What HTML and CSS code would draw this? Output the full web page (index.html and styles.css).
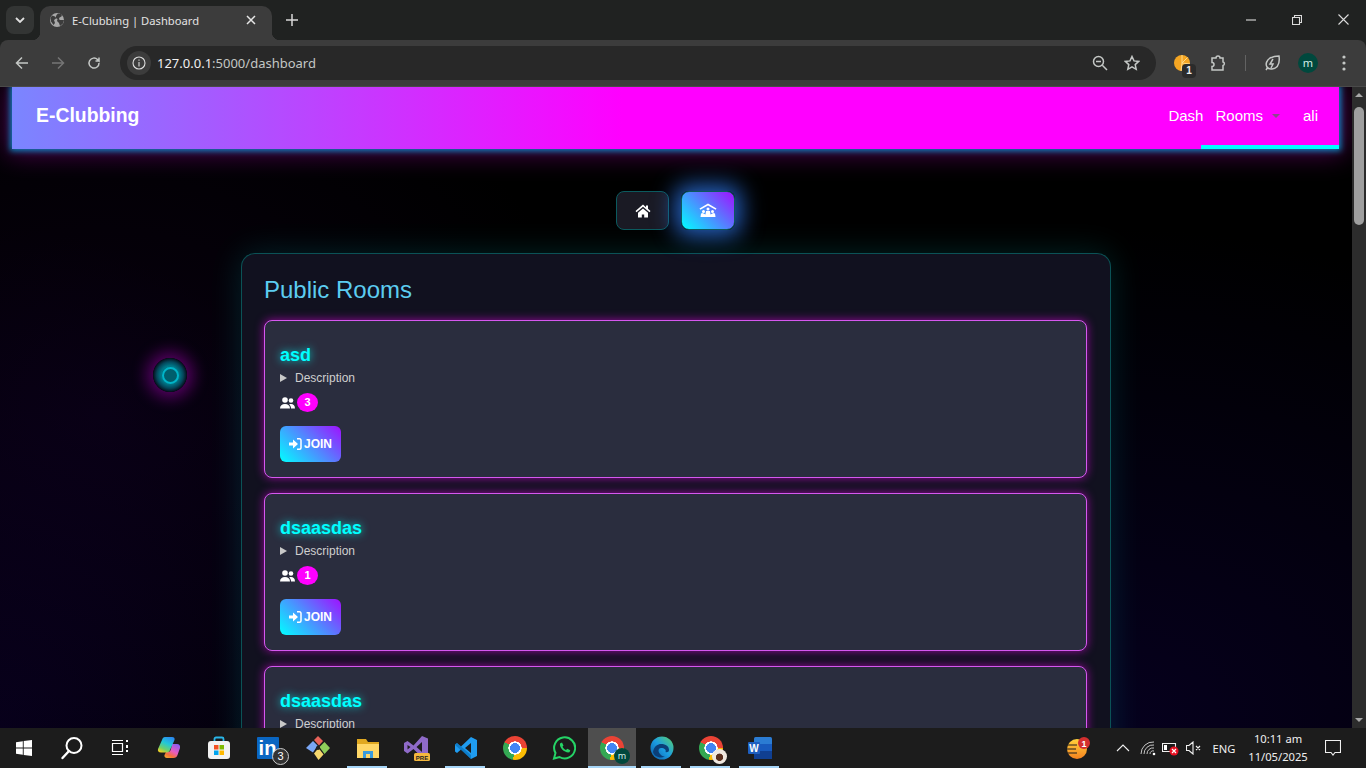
FILE: index.html
```html
<!DOCTYPE html>
<html lang="en">
<head>
<meta charset="utf-8">
<title>E-Clubbing | Dashboard</title>
<link rel="stylesheet" href="styles.css">
</head>
<body>
<header class="browser">
  <div class="tabstrip">
    <button class="tablist"><svg width="10" height="6" viewBox="0 0 10 6"><path d="M1 1l4 4 4-4" class="st-light2"/></svg></button>
    <div class="tab">
      <svg class="favicon" width="16" height="16" viewBox="0 0 16 16"><circle cx="8" cy="8" r="7" fill="#a8a8a8"/><path d="M3 3.500l3 1 1 2-2 1.500 1 3-1.500 2L2 9.500 1.500 6zM9 1.500l3 .5 1 2-3 2 .5 2h4.500l-1 3.500-3 2.500-1-3-2-2 .5-2-2-1 1-3z" fill="#3c3c3c"/></svg>
      <span class="tab-title">E-Clubbing | Dashboard</span>
      <svg class="tab-close" width="10" height="10" viewBox="0 0 10 10"><path d="M1 1l8 8M9 1l-8 8" class="st-white"/></svg>
    </div>
    <svg class="newtab" width="12" height="12" viewBox="0 0 12 12"><path d="M6 0v12M0 6h12" class="st-light"/></svg>
    <div class="win-controls">
      <span class="win-btn"><svg width="10" height="10" viewBox="0 0 10 10"><path d="M0 5h10" class="st-thin"/></svg></span>
      <span class="win-btn"><svg width="10" height="10" viewBox="0 0 10 10"><path d="M.5 2.500h7v7h-7zM2.500 2.500v-2h7v7h-2" class="st-thin"/></svg></span>
      <span class="win-btn"><svg width="11" height="11" viewBox="0 0 11 11"><path d="M.5.500l10 10M10.500.500l-10 10" class="st-thin"/></svg></span>
    </div>
  </div>
  <div class="toolbar">
    <span class="tool"><svg width="14" height="14" viewBox="0 0 14 14"><path d="M13 7H2M7 1.500L1.500 7 7 12.500" class="st-mid"/></svg></span>
    <span class="tool"><svg width="14" height="14" viewBox="0 0 14 14"><path d="M1 7h11M7 1.500L12.500 7 7 12.500" class="st-dim"/></svg></span>
    <span class="tool"><svg width="14" height="14" viewBox="0 0 14 14"><path d="M12 7a5 5 0 1 1-1.500-3.500L12 5V1.500M12 5H8.500" class="st-mid"/></svg></span>
    <div class="omnibox">
      <span class="info"><svg width="14" height="14" viewBox="0 0 14 14"><circle cx="7" cy="7" r="6" class="st-thin"/><path d="M7 6v4.500M7 3.500v1.300" class="st-thin"/></svg></span>
      <span class="url"><span class="url-host">127.0.0.1</span>:5000/dashboard</span>
      <span class="omni-icon"><svg width="16" height="16" viewBox="0 0 16 16"><circle cx="6.500" cy="6.500" r="5" class="st-mid"/><path d="M10.300 10.300L15 15M4 6.500h5" class="st-mid"/></svg></span>
      <span class="omni-icon"><svg width="16" height="16" viewBox="0 0 16 16"><path d="M8 1.500l2 4.400 4.700.5-3.500 3.200 1 4.700L8 11.900l-4.200 2.400 1-4.700L1.300 6.400 6 5.900z" class="st-mid"/></svg></span>
    </div>
    <span class="tool tool-first"><svg width="24" height="24" viewBox="0 0 24 24"><circle cx="12" cy="12" r="8" fill="#f5a623"/><path d="M12 4v8l5.500-5.500M12 12l8 1M12 12l-1 8" stroke="#ffd98a" fill="none"/></svg><span class="ext-badge">1</span></span>
    <span class="tool"><svg width="18" height="18" viewBox="0 0 18 18"><path d="M3 4h4a2 2 0 0 1 4 0h3v4a1.800 1.800 0 0 1 0 3.500V16H3v-3.500a2 2 0 0 0 0-4z" class="st-mid"/></svg></span>
    <span class="tool-sep"></span>
    <span class="tool"><svg width="18" height="18" viewBox="0 0 18 18"><path d="M16 2c1 7-1 12-7 13-2 .3-4-.5-5-2-2-3 0-7 3-9 3-1.500 6-2 9-2zM3 16l2-3M10 5l-3 5h3l-2 4" class="st-mid"/></svg></span>
    <span class="tool"><span class="avatar">m</span></span>
    <span class="tool"><svg width="4" height="16" viewBox="0 0 4 16"><circle cx="2" cy="2" r="1.600" class="fill-mid"/><circle cx="2" cy="8" r="1.600" class="fill-mid"/><circle cx="2" cy="14" r="1.600" class="fill-mid"/></svg></span>
  </div>
</header>

<div class="viewport">
  <main class="page">
    <nav class="navbar">
      <a class="brand">E-Clubbing</a>
      <div class="nav-links">
        <a class="nav-link">Dash</a>
        <a class="nav-link nav-rooms">Rooms<span class="caret"></span></a>
        <a class="nav-link nav-user">ali</a>
      </div>
    </nav>

    <div class="switcher">
      <button class="switch-btn"><svg width="16" height="16" viewBox="0 0 16 16"><path class="fill-white" d="M8 1.500L.500 8l1 1.200L8 3.700l6.500 5.500 1-1.200-2.500-2.200V2.500h-2v1.800zM3 9.700L8 5.400l5 4.300v4.800H9.200v-3H6.800v3H3z"/></svg></button>
      <button class="switch-btn is-active"><svg width="18" height="16" viewBox="0 0 18 16"><path class="fill-white" d="M9 .5L.500 5.500l.8 1.300L9 2.400l7.700 4.400.8-1.300z"/><circle class="fill-white" cx="9" cy="6" r="1.500"/><circle class="fill-white" cx="4.500" cy="8.500" r="1.500"/><circle class="fill-white" cx="13.500" cy="8.500" r="1.500"/><path class="fill-white" d="M7 8h4l.5 3.500 2-1 .5-.5 2 .5.500 3.500H1.500L2 10.500l2-.5 .5.5 2 1z"/></svg></button>
    </div>

    <section class="rooms-panel">
      <h2 class="rooms-heading">Public Rooms</h2>
      <div class="room-list">
        <article class="room">
          <h3 class="room-name">asd</h3>
          <details class="room-desc"><summary>Description</summary></details>
          <div class="room-members">
            <svg width="15" height="12" viewBox="0 0 15 12"><circle class="fill-white" cx="5" cy="3" r="2.800"/><circle class="fill-white" cx="11" cy="3.500" r="2.300"/><path class="fill-white" d="M0 11.500C0 8.500 2 7 5 7s5 1.500 5 4.500zM11 11.500h4c0-3-1.500-4.500-4-4.500-.8 0-1.300.1-1.800.4 1.200.9 1.800 2.300 1.800 4.100z"/></svg>
            <span class="badge">3</span>
          </div>
          <button class="join-btn"><svg width="13" height="12" viewBox="0 0 13 12"><path class="fill-white" d="M0 4.500h4V1.500L9 6 4 10.500v-3H0z"/><path d="M8 .8h2.500a1.500 1.500 0 0 1 1.500 1.500v7.400a1.500 1.500 0 0 1-1.500 1.500H8" class="st-join"/></svg>JOIN</button>
        </article>
        <article class="room">
          <h3 class="room-name">dsaasdas</h3>
          <details class="room-desc"><summary>Description</summary></details>
          <div class="room-members">
            <svg width="15" height="12" viewBox="0 0 15 12"><circle class="fill-white" cx="5" cy="3" r="2.800"/><circle class="fill-white" cx="11" cy="3.500" r="2.300"/><path class="fill-white" d="M0 11.500C0 8.500 2 7 5 7s5 1.500 5 4.500zM11 11.500h4c0-3-1.500-4.500-4-4.500-.8 0-1.300.1-1.800.4 1.200.9 1.800 2.300 1.800 4.100z"/></svg>
            <span class="badge">1</span>
          </div>
          <button class="join-btn"><svg width="13" height="12" viewBox="0 0 13 12"><path class="fill-white" d="M0 4.500h4V1.500L9 6 4 10.500v-3H0z"/><path d="M8 .8h2.500a1.500 1.500 0 0 1 1.500 1.500v7.400a1.500 1.500 0 0 1-1.500 1.500H8" class="st-join"/></svg>JOIN</button>
        </article>
        <article class="room">
          <h3 class="room-name">dsaasdas</h3>
          <details class="room-desc"><summary>Description</summary></details>
        </article>
      </div>
    </section>

    <div class="orb"><span class="orb-ring"></span></div>
  </main>
  <aside class="scrollbar">
    <span class="sb-up"></span>
    <span class="sb-thumb"></span>
    <span class="sb-down"></span>
  </aside>
</div>

<footer class="taskbar">
  <span class="tb-item tb-narrow"><svg width="18" height="18" viewBox="0 0 18 18"><path fill="#fff" d="M1 3.200l6.800-1v6.300H1zM8.700 2.100L17 .9v7.600H8.700zM1 9.500h6.800v6.300l-6.800-1zM8.700 9.500H17v7.600l-8.300-1.200z"/></svg></span>
  <span class="tb-item tb-narrow"><svg width="24" height="24" viewBox="0 0 24 24"><circle cx="14" cy="9.500" r="7.500" fill="none" stroke="#fff" stroke-width="2"/><path d="M9 15l-6.500 7" stroke="#fff" stroke-width="2.400" stroke-linecap="round"/></svg></span>
  <span class="tb-item tb-narrow"><svg width="18" height="18" viewBox="0 0 18 18"><path d="M1.500 4.500h10v8h-10zM1 1.500h11M1 15.500h11" fill="none" stroke="#fff" stroke-width="1.200"/><path d="M15 1h2v2h-2zM15 6h2v3h-2zM15 11h2v2h-2z" fill="#fff"/></svg></span>
  <span class="tb-item tb-copilot"><svg width="24" height="24" viewBox="0 0 24 24"><defs><linearGradient id="cpA" x1=".7" y1="0" x2=".2" y2="1"><stop offset="0" stop-color="#2a8cf0"/><stop offset=".4" stop-color="#22c8d8"/><stop offset=".75" stop-color="#6fd06a"/><stop offset="1" stop-color="#f5d020"/></linearGradient><linearGradient id="cpB" x1=".8" y1="0" x2=".2" y2="1"><stop offset="0" stop-color="#8a5cf0"/><stop offset=".5" stop-color="#e85cc0"/><stop offset=".8" stop-color="#f5703a"/><stop offset="1" stop-color="#f0a030"/></linearGradient></defs><path fill="url(#cpB)" d="M15 8h5c2.200 0 3.500 1.500 3 4l-2.500 7c-.5 2-2 3-4 3H10c-2 0-3-1.500-2.500-3l1.500-3h2c1.500 0 2.500-1 3-3z"/><path fill="url(#cpA)" d="M8 1h7c2 0 3 1 2.500 3L13 14c-.5 1.500-1.500 2.500-3 2.500H4C1.500 16.500.5 15 1 13L5 4c.5-2 1.500-3 3-3z"/></svg></span>
  <span class="tb-item"><svg width="24" height="24" viewBox="0 0 24 24"><path d="M7.500 6V3a1.500 1.500 0 0 1 1.500-1.500h6A1.500 1.500 0 0 1 16.500 3v3" fill="none" stroke="#29b6e8" stroke-width="1.800"/><rect x="1" y="5" width="22" height="18" rx="3" fill="#f2f2f2"/><rect x="7" y="9" width="4.500" height="4.500" fill="#f25022"/><rect x="12.500" y="9" width="4.500" height="4.500" fill="#7fba00"/><rect x="7" y="14.500" width="4.500" height="4.500" fill="#00a4ef"/><rect x="12.500" y="14.500" width="4.500" height="4.500" fill="#ffb900"/></svg></span>
  <span class="tb-item tb-linkedin"><span class="li-logo">in</span><span class="li-count">3</span></span>
  <span class="tb-item tb-wide"><svg width="26" height="26" viewBox="0 0 26 26"><path fill="#7aa7f5" d="M1 13l7-7 4.500 4.500L8 17.500z"/><path fill="#e8635a" d="M9 5l4-4 5 5-4 4.500z"/><path fill="#8fcf5a" d="M14.500 12l5-5L25 13l-5.500 6z"/><path fill="#f5d76e" d="M9 18.500l4.500-5.500 5 6.500-5 5.500z"/><circle cx="13" cy="13" r="2" fill="#222"/></svg></span>
  <span class="tb-item tb-open"><svg width="24" height="22" viewBox="0 0 24 22"><path fill="#e0a820" d="M1 2h9l2 3h11v15H1z"/><path fill="#ffd767" d="M1 7h22v14H1z"/><path fill="#3a9bdc" d="M7 21v-7h10v7h-3v-4h-4v4z"/></svg></span>
  <span class="tb-item"><svg width="26" height="26" viewBox="0 0 26 26"><path fill="#8f6ac8" d="M0 8l3.500-2 6 4.500L18 1l6 2.500V20l-6 2.500-8.500-8.500-6 4.500L0 16zM3.500 10v4.500L6.500 12zM12.500 12l5.500 5V7z"/><rect x="10" y="18" width="16" height="8" rx="1.500" fill="#f5b83d"/><text x="18" y="24.500" class="pre-text">PRE</text></svg></span>
  <span class="tb-item tb-open"><svg width="24" height="24" viewBox="0 0 24 24"><path fill="#1f9cf0" d="M17 1l6 3v16l-6 3-10-9.500L3 17l-2-1.500v-7L3 7l4 3.500zM17 7l-6 5 6 5z"/><path fill="#0065a9" d="M1 8.500L3 7l14 12v4L1 9z" opacity=".55"/></svg></span>
  <span class="tb-item"><span class="chrome"></span></span>
  <span class="tb-item"><svg width="24" height="24" viewBox="0 0 24 24"><path d="M2 22.500l1.500-5.500a10.500 10.500 0 1 1 4 4z" fill="none" stroke="#25d366" stroke-width="2"/><path d="M8 7.500l2-1 1.500 3-1 1.300c.8 1.500 2 2.600 3.500 3.300l1.300-1.300 3 1.500-.8 2c-4.500 1-10.500-4.500-9.500-8.800z" fill="#25d366"/></svg></span>
  <span class="tb-item tb-active"><span class="chrome"></span><span class="profile-chip">m</span></span>
  <span class="tb-item tb-open"><svg width="24" height="24" viewBox="0 0 24 24"><defs><linearGradient id="edgeA" x1="0" y1="1" x2="1" y2="0"><stop offset="0" stop-color="#0c59a4"/><stop offset=".5" stop-color="#1b9de2"/><stop offset="1" stop-color="#5ad36a"/></linearGradient></defs><circle cx="12" cy="12" r="11.500" fill="url(#edgeA)"/><path fill="#0b3f78" d="M3 16c1-6 5-8 8-8 5 0 8 2.500 8 6 0 2-2 2.500-3.500 2 1-2-1-4-4.500-4-3 0-3.500 4 0 7 1 1 3 1.500 4 1.500-5 2.500-11 0-12-4.500z"/></svg></span>
  <span class="tb-item tb-open"><span class="chrome"></span><span class="profile-photo"></span></span>
  <span class="tb-item tb-open"><svg width="26" height="24" viewBox="0 0 26 24"><rect x="7" y="1" width="18" height="22" rx="1.500" fill="#2b7cd3"/><rect x="7" y="8" width="18" height="7" fill="#185abd"/><rect x="7" y="15" width="18" height="8" fill="#103f91"/><rect x="1" y="6" width="12" height="12" rx="1" fill="#1e5fc0"/><text x="7" y="15.500" class="word-text">W</text></svg></span>

  <div class="tray">
    <span class="tray-weather"><svg width="28" height="24" viewBox="0 0 28 24"><defs><linearGradient id="sunA" x1="0" y1="0" x2="0" y2="1"><stop offset="0" stop-color="#ffd23c"/><stop offset="1" stop-color="#f5821f"/></linearGradient></defs><circle cx="13" cy="13" r="10" fill="url(#sunA)"/><path d="M1 9h12M0 13h12M3 17h10" stroke="#1c1c1c" stroke-width="1.200"/><circle cx="20" cy="7" r="6" fill="#d32f2f"/><text x="20" y="10.500" class="weather-text">1</text></svg></span>
    <span class="tray-icon tray-chevron"><svg width="14" height="8" viewBox="0 0 14 8"><path d="M1 7l6-6 6 6" class="st-tray"/></svg></span>
    <span class="tray-icon"><svg width="16" height="16" viewBox="0 0 16 16"><path d="M1 14a12 12 0 0 1 13-12M4 14a9 9 0 0 1 10-9M7 14a6 6 0 0 1 7-6M10 14a3 3 0 0 1 4-3" class="st-wifi"/><circle cx="14" cy="14" r="1.300" fill="#fff"/></svg></span>
    <span class="tray-icon"><svg width="18" height="16" viewBox="0 0 18 16"><path d="M.5 3.500h13v8H.5z" class="st-tray"/><rect x="2" y="5" width="3" height="5" fill="#fff"/><circle cx="12" cy="11" r="4.500" fill="#e81123"/><path d="M10 9l4 4M14 9l-4 4" stroke="#fff" stroke-width="1.200"/></svg></span>
    <span class="tray-icon"><svg width="16" height="14" viewBox="0 0 16 14"><path d="M.5 4.500h2.500L7 1v12L3 9.500H.5zM10 5l4 4M14 5l-4 4" class="st-tray"/></svg></span>
    <span class="tray-lang">ENG</span>
    <span class="tray-clock"><span>10:11 am</span><span>11/05/2025</span></span>
    <span class="tray-notify"><svg width="16" height="16" viewBox="0 0 16 16"><path d="M.5.500h15v12H10L8 15l-2-2.500H.5z" class="st-tray"/></svg></span>
  </div>
</footer>
</body>
</html>
```
FILE: styles.css
```css
* { box-sizing: border-box; }
html, body { margin: 0; height: 768px; overflow: hidden; }
body { display: flex; flex-direction: column; width: 1366px; background: #000; font-family: "Liberation Sans", Arial, sans-serif; color: #fff; }
button { font: inherit; border: 0; padding: 0; color: inherit; }
a { color: inherit; }
svg { display: block; flex: none; }

.st-white { fill: none; stroke: #e6e6e6; stroke-width: 1.500; }
.st-light { fill: none; stroke: #d8d8d8; stroke-width: 1.500; }
.st-light2 { fill: none; stroke: #e0e0e0; stroke-width: 1.800; }
.st-thin { fill: none; stroke: #dcdcdc; stroke-width: 1.100; }
.st-mid { fill: none; stroke: #c4c7c5; stroke-width: 1.500; }
.st-dim { fill: none; stroke: #757575; stroke-width: 1.500; }
.st-join { fill: none; stroke: #fff; stroke-width: 1.500; }
.st-tray { fill: none; stroke: #f0f0f0; stroke-width: 1.100; }
.st-wifi { fill: none; stroke: #d8d8d8; stroke-width: .9; }
.fill-white { fill: #fff; }
.fill-mid { fill: #c4c7c5; }

/* browser chrome */
.browser { flex: none; height: 87px; background: #202221; }
.tabstrip { height: 40px; display: flex; align-items: flex-end; padding-left: 6px; position: relative; }
.tablist { width: 28px; height: 28px; margin-bottom: 6px; border-radius: 8px; background: #333534; display: flex; align-items: center; justify-content: center; }
.tab { width: 232px; height: 34px; margin-left: 6px; padding: 0 16px 6px 9px; background: #3c3c3c; border-radius: 10px 10px 0 0; display: flex; align-items: center; font-family: "Noto Sans", sans-serif; font-size: 11.200px; color: #e3e3e3; position: relative; }
.tab::before, .tab::after { content: ""; position: absolute; bottom: 0; width: 8px; height: 8px; }
.tab::before { left: -8px; background: radial-gradient(circle at 0 0, transparent 8px, #3c3c3c 8.500px); }
.tab::after { right: -8px; background: radial-gradient(circle at 100% 0, transparent 8px, #3c3c3c 8.500px); }
.tab-title { margin-left: 7px; flex: 1; white-space: nowrap; }
.newtab { margin: 0 0 14px 14px; }
.win-controls { margin-left: auto; align-self: stretch; display: flex; }
.win-btn { width: 46px; display: flex; align-items: center; justify-content: center; padding-bottom: 1px; }
.toolbar { height: 47px; background: #3c3c3c; border-radius: 8px 8px 0 0; padding: 0 4px 1px; display: flex; align-items: center; border-bottom: 1px solid #4a4a4a; }
.tool { width: 36px; height: 36px; display: flex; align-items: center; justify-content: center; position: relative; flex: none; }
.tool-first { margin-left: 8px; }
.tool-sep { width: 18px; height: 16px; flex: none; background: linear-gradient(#636363, #636363) center / 1px 16px no-repeat; }
.ext-badge { position: absolute; left: 18px; top: 19px; width: 14px; height: 14px; border-radius: 4px; background: #2b2b2b; font: bold 10px "Liberation Sans", sans-serif; text-align: center; line-height: 14px; color: #eee; }
.avatar { width: 20px; height: 20px; border-radius: 50%; background: #00483d; color: #d4efe9; font: 11px/20px "Noto Sans", sans-serif; text-align: center; }
.omnibox { flex: 1; height: 34px; margin-left: 8px; background: #282828; border-radius: 17px; display: flex; align-items: center; padding: 0 8px 0 7px; }
.info { width: 24px; height: 24px; border-radius: 50%; background: #3c3c3c; display: flex; align-items: center; justify-content: center; }
.url { margin-left: 6px; flex: 1; font-family: "Noto Sans", sans-serif; font-size: 13px; color: #c4c7c5; }
.url-host { color: #f0f0f0; }
.omni-icon { width: 32px; height: 32px; display: flex; align-items: center; justify-content: center; }

/* viewport */
.viewport { flex: none; height: 641px; display: flex; overflow: hidden; }
.page { flex: 1; position: relative; overflow: hidden; background:
  radial-gradient(ellipse 500px 400px at 100px 330px, rgba(30, 0, 60, .25), transparent),
  radial-gradient(ellipse 700px 500px at 1100px 640px, rgba(10, 0, 50, .6), transparent),
  radial-gradient(ellipse 400px 500px at 0 640px, rgba(12, 0, 50, .5), transparent),
  #000; }
.navbar { height: 62px; margin: 0 13px 0 12px; padding: 0 21px 6px 24px; display: flex; align-items: center; justify-content: space-between; background: linear-gradient(90deg, #7a86ff 0, #ff00ff 46%); box-shadow: 0 0 6px 2px rgba(0, 190, 255, .7), 0 0 26px 5px rgba(255, 0, 255, .3); }
.brand { font-size: 19.400px; font-weight: bold; }
.nav-links { display: flex; align-items: center; font-size: 15px; position: relative; align-self: stretch; }
.nav-links::after { content: ""; position: absolute; right: -21px; bottom: -6px; width: 138px; height: 4px; background: #00ffff; }
.nav-rooms { margin-left: 12px; display: flex; align-items: center; }
.caret { width: 0; height: 0; margin-left: 9px; margin-top: 2px; border: 4px solid transparent; border-top-color: #8a4a8a; border-bottom: 0; }
.nav-user { margin-left: 23px; }

.switcher { display: flex; justify-content: center; gap: 12px; margin-top: 42px; padding-right: 1px; }
.switch-btn { width: 53px; height: 39px; border: 1px solid #0b5a5e; border-radius: 8px; background: #1a1a24; display: flex; align-items: center; justify-content: center; }
.switch-btn.is-active { width: 54px; background: linear-gradient(45deg, #00ffff 0, #a010ff 100%); box-shadow: 0 0 22px 6px rgba(50, 130, 255, .75); }

.rooms-panel { width: 870px; height: 520px; margin: 23px auto 0; padding: 22px 23px 22px 22px; border: 1px solid #0b5256; border-bottom: 0; border-radius: 14px 14px 0 0; background: #11111f; box-shadow: 0 0 32px rgba(0, 255, 255, .14); }
.rooms-heading { margin: 0 0 16px; font-size: 24px; font-weight: normal; line-height: 28px; color: #5cccf0; }
.room-list { display: flex; flex-direction: column; gap: 15px; }
.room { height: 158px; flex: none; padding: 23px 15px 15px; border: 1px solid #d558ef; border-radius: 8px; background: #2a2d3e; box-shadow: 0 0 10px rgba(255, 0, 255, .55); }
.room-name { margin: 0; font-size: 18px; line-height: 22px; font-weight: bold; color: #00ffff; text-shadow: 0 0 8px rgba(0, 255, 255, .8); }
.room-desc { margin-top: 4px; font-size: 12px; line-height: 16px; color: #cfcfcf; }
.room-desc summary { cursor: pointer; list-style: none; display: flex; align-items: center; gap: 8px; }
.room-desc summary::before { content: ""; width: 0; height: 0; border-left: 7px solid #c8c8c8; border-top: 4px solid transparent; border-bottom: 4px solid transparent; }
.room-members { display: flex; align-items: center; gap: 2px; margin-top: 7px; height: 19px; }
.badge { width: 21px; height: 19px; border-radius: 50%; background: #ff00ff; font-size: 11px; font-weight: bold; line-height: 19px; text-align: center; }
.join-btn { margin-top: 14px; width: 61px; height: 36px; border-radius: 6px; background: linear-gradient(45deg, #00ffff 0, #4f8bff 50%, #a010ff 100%); display: flex; align-items: center; justify-content: center; gap: 2px; font-size: 12px; font-weight: bold; }

.orb { position: absolute; left: 153px; top: 271px; width: 34px; height: 34px; border-radius: 50%; background: radial-gradient(circle closest-side, #005e6c 0 36%, #007a8a 52%, #04465a 78%, #050c18 100%); box-shadow: 0 0 16px 6px rgba(200, 0, 220, .42); display: flex; align-items: center; justify-content: center; }
.orb-ring { width: 17px; height: 17px; border-radius: 50%; border: 2.500px solid #00b4c8; background: #005e6c; }

.scrollbar { flex: none; width: 14px; background: #2c2c2c; display: flex; flex-direction: column; align-items: center; position: relative; }
.sb-up { margin-top: 6px; width: 0; height: 0; flex: none; border: 4.500px solid transparent; border-top: 0; border-bottom-color: #a8a8a8; }
.sb-thumb { margin-top: 10px; width: 10px; height: 118px; flex: none; border-radius: 5px; background: #9f9f9f; }
.sb-down { margin-top: auto; margin-bottom: 6px; width: 0; height: 0; border: 4.500px solid transparent; border-bottom: 0; border-top-color: #a8a8a8; }

/* taskbar */
.taskbar { flex: none; height: 40px; background: #1c1c1c; display: flex; position: relative; }
.tb-item { width: 49px; height: 40px; flex: none; display: flex; align-items: center; justify-content: center; position: relative; }
.tb-narrow { width: 48px; }
.tb-copilot { width: 50px; }
.tb-wide { width: 51px; }
.tb-open::after, .tb-active::after { content: ""; position: absolute; bottom: 0; left: 4px; right: 5px; height: 2px; background: #a6d5f7; }
.tb-active { background: #4e4e4e content-box; padding-right: 1px; }
.tb-active::after { left: 0; right: 1px; }
.tb-linkedin { font-family: "Liberation Sans", sans-serif; }
.li-logo { width: 22px; height: 22px; background: #0a66c2; border-radius: 1px; font-size: 20px; font-weight: bold; line-height: 22px; text-align: center; }
.li-count { position: absolute; left: 29px; top: 20px; width: 17px; height: 17px; border-radius: 50%; background: #333; border: 1px solid #ccc; font-size: 11px; line-height: 15px; text-align: center; }
.chrome { width: 24px; height: 24px; border-radius: 50%; background:
  radial-gradient(circle closest-side, #4285f4 0 40%, #fff 42% 54%, transparent 56%),
  conic-gradient(from -60deg, #ea4335 0 150deg, #fbbc04 150deg 250deg, #34a853 250deg 360deg); }
.profile-chip { position: absolute; left: 26px; top: 20px; width: 16px; height: 16px; border-radius: 50%; background: #00483d; font: 9px/16px "Noto Sans", sans-serif; text-align: center; color: #d4efe9; }
.profile-photo { position: absolute; left: 26px; top: 21px; width: 15px; height: 15px; border-radius: 50%; background: radial-gradient(circle at 50% 55%, #5a2f1f 0 30%, #efe8e0 36%); }
.pre-text { font: bold 6px "Liberation Sans", sans-serif; fill: #222; text-anchor: middle; }
.word-text { font: bold 10px "Liberation Sans", sans-serif; fill: #fff; text-anchor: middle; }
.weather-text { font: bold 9px "Liberation Sans", sans-serif; fill: #fff; text-anchor: middle; }
.tray { margin-left: auto; display: flex; align-items: center; color: #f0f0f0; font-family: "Noto Sans", sans-serif; font-size: 11.200px; }
.tray-weather { width: 28px; margin-right: 19.500px; }
.tray-icon { width: 23px; display: flex; justify-content: center; }
.tray-chevron { margin-right: 2px; }
.tray-lang { width: 28px; margin-left: 4.500px; text-align: center; }
.tray-clock { width: 80px; display: flex; flex-direction: column; align-items: center; line-height: 18px; }
.tray-notify { width: 48px; padding-right: 18px; display: flex; justify-content: center; }
```
